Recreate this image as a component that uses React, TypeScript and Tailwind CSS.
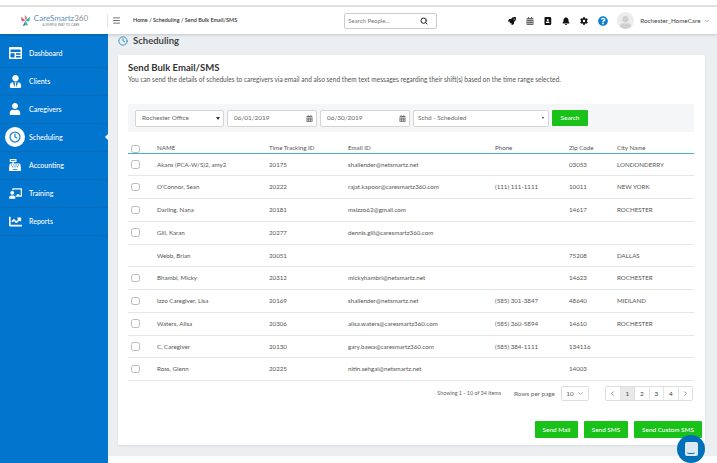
import { ChevronDown, ChevronLeft, ChevronRight, Clock, Menu, Search } from "lucide-react";
import {
  FaAddressBook,
  FaBell,
  FaCalendarAlt,
  FaCashRegister,
  FaChalkboardTeacher,
  FaChartLine,
  FaCog,
  FaQuestionCircle,
  FaRocket,
  FaUser,
  FaUserTie,
} from "react-icons/fa";

function DashboardIcon() {
  return (
    <svg width="13" height="12" viewBox="0 0 13 12">
      <rect width="13" height="12" rx="1" fill="white" />
      <rect x="1.5" y="2.5" width="10" height="2.5" fill="#0275cf" />
      <rect x="1.5" y="6.2" width="4" height="4.3" fill="#0275cf" />
      <rect x="7" y="6.2" width="4.5" height="1.6" fill="#0275cf" />
      <rect x="7" y="9" width="4.5" height="1.5" fill="#0275cf" />
    </svg>
  );
}

const nav = [
  { label: "Dashboard", icon: <DashboardIcon /> },
  { label: "Clients", icon: <FaUserTie size={13} /> },
  { label: "Caregivers", icon: <FaUser size={12} /> },
  { label: "Scheduling", icon: null },
  { label: "Accounting", icon: <FaCashRegister size={12} /> },
  { label: "Training", icon: <FaChalkboardTeacher size={13} /> },
  { label: "Reports", icon: <FaChartLine size={13} /> },
];

const rows = [
  ["Akans (PCA-W/S)2, amy2", "20175", "shailender@netsmartz.net", "", "03053", "LONDONDERRY", true],
  ["O'Connor, Sean", "20222", "rajat.kapoor@caresmartz360.com", "(111) 111-1111", "10011", "NEW YORK", true],
  ["Darling, Nana", "20181", "msizzo62@gmail.com", "", "14617", "ROCHESTER", true],
  ["Gill, Karan", "20277", "dennis.gill@caresmartz360.com", "", "", "", true],
  ["Webb, Brian", "20051", "", "", "75208", "DALLAS", false],
  ["Bhambi, Micky", "20312", "mickyhambri@netsmartz.net", "", "14623", "ROCHESTER", true],
  ["Izzo Caregiver, Lisa", "20169", "shailender@netsmartz.net", "(585) 301-3847", "48640", "MIDLAND", true],
  ["Waters, Alisa", "20306", "alisa.waters@caresmartz360.com", "(585) 360-5894", "14610", "ROCHESTER", true],
  ["C, Caregiver", "20130", "gary.bawa@caresmartz360.com", "(585) 384-1111", "134116", "", true],
  ["Ross, Glenn", "20225", "nitin.sehgal@netsmartz.net", "", "14003", "", true],
] as const;

const gridCols = "grid grid-cols-[29px_112px_79px_147px_74px_48px_1fr] items-center";

function Logo() {
  return (
    <div className="flex w-[108px] shrink-0 items-center justify-center gap-[2px] border-r border-[#e3e5e8]">
      <svg width="13" height="13" viewBox="0 0 14 14">
        <path d="M7 7 2 3l1 5z" fill="#e2568f" />
        <path d="M7 7 6 1l3 3z" fill="#e8734a" />
        <path d="M7 7l5-4-1 5z" fill="#2aa8c9" />
        <path d="M7 7 4 13l3-1z" fill="#2f6fb5" />
        <path d="M7 7l3 5-3 0z" fill="#5cb85c" />
      </svg>
      <div className="flex flex-col items-center leading-none">
        <span className="text-[8px] leading-[9px] text-[#5b8fbe]">
          CareSmartz<span className="text-[#8a8f96]">360</span>
        </span>
        <span className="text-[3.3px] leading-[4px] text-[#777]">A SIMPLE WAY TO CARE</span>
      </div>
    </div>
  );
}

function Header() {
  return (
    <header className="relative z-10 flex h-[27px] shrink-0 items-center bg-white shadow-[0_1px_3px_rgba(0,0,0,0.18)]">
      <Logo />
      <div className="flex h-full flex-1 items-center pl-[4px]">
        <Menu size={9} className="text-[#444]" strokeWidth={2} />
        <span className="ml-[12px] text-[5.5px] font-semibold text-[#333]">Home / Scheduling / Send Bulk Email/SMS</span>
        <div className="ml-[107px] flex h-[16px] w-[93px] items-center justify-between rounded-[2px] border border-[#ccc] px-[3px]">
          <span className="text-[6px] text-[#777]">Search People...</span>
          <Search size={8} className="mr-[5px] text-[#222]" strokeWidth={3} />
        </div>
        <div className="ml-[71px] flex items-center gap-[10px] text-[#111]">
          <FaRocket size={8} />
          <FaCalendarAlt size={8} className="text-[#666]" />
          <FaAddressBook size={8} />
          <FaBell size={8} />
          <FaCog size={8} />
          <FaQuestionCircle size={10} className="text-[#0d7ed1]" />
        </div>
        <div className="ml-[9px] flex size-[17px] items-end justify-center overflow-hidden rounded-full bg-[#ececec]">
          <FaUser size={13} className="text-[#cfcfcf]" />
        </div>
        <span className="ml-[6px] text-[6.3px] text-[#444]">Rochester_HomeCare</span>
        <ChevronDown size={6} className="ml-[3px] text-[#555]" />
      </div>
    </header>
  );
}

function Sidebar() {
  return (
    <aside className="w-[108px] shrink-0 bg-[#0275cf] pt-[5.5px]">
      {nav.map((item) => (
        <div key={item.label} className="relative flex h-[28px] items-center border-b border-[#0a6cba] pl-[5px] text-white">
          <div className="flex w-[20px] justify-center">
            {item.icon ?? (
              <div className="flex size-[20px] items-center justify-center rounded-full bg-white">
                <Clock size={12} className="text-[#1b86c8]" strokeWidth={2.5} />
              </div>
            )}
          </div>
          <span className="ml-[4px] text-[7px] font-medium">{item.label}</span>
          {item.icon === null && (
            <div className="absolute right-0 size-0 border-y-[3px] border-r-[3px] border-y-transparent border-r-white" />
          )}
        </div>
      ))}
    </aside>
  );
}

function Row({ row }: { row: (typeof rows)[number] }) {
  const [name, id, email, phone, zip, city, hasBox] = row;
  return (
    <div className={`${gridCols} h-[22.75px] border-b border-[#e6e6e6] text-[6.2px] text-[#555]`}>
      <div className="pl-[3px]">
        {hasBox && <div className="size-[8.5px] rounded-[2.5px] border border-[#bbb] bg-white" />}
      </div>
      <span>{name}</span>
      <span>{id}</span>
      <span>{email}</span>
      <span>{phone}</span>
      <span>{zip}</span>
      <span>{city}</span>
    </div>
  );
}

function Filters() {
  const field = "flex h-[17px] items-center justify-between rounded-[2px] border border-[#d5d5d5] bg-white text-[6.4px] text-[#666]";
  return (
    <div className="mt-[20px] flex h-[28px] items-center gap-[3px] bg-[#f5f6f8] pl-[7px]">
      <div className={`${field} w-[89px] pl-[6px] pr-[3px]`}>
        Rochester Office
        <span className="size-0 border-x-[2px] border-t-[3px] border-x-transparent border-t-[#333]" />
      </div>
      <div className={`${field} w-[90px] pl-[6px] pr-[3px]`}>
        06/01/2019
        <FaCalendarAlt size={7} className="text-[#777]" />
      </div>
      <div className={`${field} w-[90px] pl-[6px] pr-[3px]`}>
        06/30/2019
        <FaCalendarAlt size={7} className="text-[#777]" />
      </div>
      <div className={`${field} w-[136px] pl-[4px] pr-[4px]`}>
        Schd - Scheduled
        <span className="size-0 border-x-[1.5px] border-t-[2px] border-x-transparent border-t-[#333]" />
      </div>
      <button className="flex h-[16px] w-[36px] items-center justify-center rounded-[1px] bg-[#19c119] text-[6.4px] font-medium text-white">
        Search
      </button>
    </div>
  );
}

function Pagination() {
  return (
    <div className="mt-[5px] flex items-center justify-end pr-[1px] text-[#666]">
      <span className="text-[5.4px]">Showing 1 - 10 of 34 items</span>
      <span className="ml-[13px] text-[6.4px]">Rows per page</span>
      <div className="ml-[6px] flex h-[15px] w-[28px] items-center justify-center gap-[3px] rounded-[2px] border border-[#ddd] text-[6.4px]">
        10 <ChevronDown size={7} />
      </div>
      <div className="ml-[16px] flex h-[15px] w-[88px] items-stretch rounded-[2px] border border-[#ddd] text-[6.4px] text-[#444]">
        <div className="flex flex-1 items-center justify-center border-r border-[#e5e5e5]">
          <ChevronLeft size={7} />
        </div>
        <div className="flex flex-1 items-center justify-center border-r border-[#ddd] bg-[#e9e9e9]">1</div>
        <div className="flex flex-1 items-center justify-center border-r border-[#e5e5e5]">2</div>
        <div className="flex flex-1 items-center justify-center border-r border-[#e5e5e5]">3</div>
        <div className="flex flex-1 items-center justify-center border-r border-[#e5e5e5]">4</div>
        <div className="flex flex-1 items-center justify-center">
          <ChevronRight size={7} />
        </div>
      </div>
    </div>
  );
}

function Main() {
  const action = "flex h-[17px] items-center justify-center rounded-[1px] bg-[#19c119] text-[6.4px] font-medium text-white";
  return (
    <main className="relative flex flex-1 flex-col bg-[#eceff2]">
      <div className="flex h-[21px] shrink-0 items-start pl-[10px] pt-[2px]">
        <Clock size={10} className="text-[#1b86c8]" />
        <span className="ml-[5px] text-[9.5px] font-bold leading-[10px] text-[#444]">Scheduling</span>
      </div>
      <section className="ml-[10px] h-[390px] w-[587px] rounded-[2px] bg-white pl-[10px] pr-[11px] pt-[7px] shadow-[0_1px_3px_rgba(0,0,0,0.08)]">
        <h1 className="text-[9.5px] font-bold leading-[12px] text-[#333]">Send Bulk Email/SMS</h1>
        <p className="mt-[1px] text-[6.55px] leading-[9px] text-[#555]">
          You can send the details of schedules to caregivers via email and also send them text messages regarding their shift(s) based on the time range selected.
        </p>
        <Filters />
        <div className={`${gridCols} mt-[11px] h-[10.5px] border-b border-[#45b0cf] text-[6.2px] text-[#555]`}>
          <div className="pl-[3px]">
            <div className="size-[8.5px] translate-y-[1px] rounded-[2.5px] border border-[#bbb]" />
          </div>
          <span>NAME</span>
          <span>Time Tracking ID</span>
          <span>Email ID</span>
          <span>Phone</span>
          <span>Zip Code</span>
          <span>City Name</span>
        </div>
        {rows.map((row) => (
          <Row key={row[1]} row={row} />
        ))}
        <Pagination />
        <div className="mr-[-8px] mt-[20px] flex justify-end gap-[6px]">
          <button className={`${action} w-[43px]`}>Send Mail</button>
          <button className={`${action} w-[44px]`}>Send SMS</button>
          <button className={`${action} w-[68px]`}>Send Custom SMS</button>
        </div>
      </section>
      <div className="mt-auto h-[7px] bg-white" />
      <div className="absolute bottom-0 right-[12px] flex size-[28px] items-center justify-center rounded-full bg-[#0071b9]">
        <div className="flex h-[14px] w-[13px] items-end justify-center rounded-[2px] bg-[#dbe9f3] pb-[2px]">
          <div className="h-[2px] w-[8px] rounded-b-full border-b border-[#0071b9]" />
        </div>
      </div>
    </main>
  );
}

export default function App() {
  return (
    <div className="flex h-[463px] w-[717px] flex-col overflow-hidden bg-white font-['Lato',sans-serif]">
      <div className="h-[7px] shrink-0 border-b-2 border-[#e4e4e4]" />
      <Header />
      <div className="flex flex-1">
        <Sidebar />
        <Main />
      </div>
    </div>
  );
}
